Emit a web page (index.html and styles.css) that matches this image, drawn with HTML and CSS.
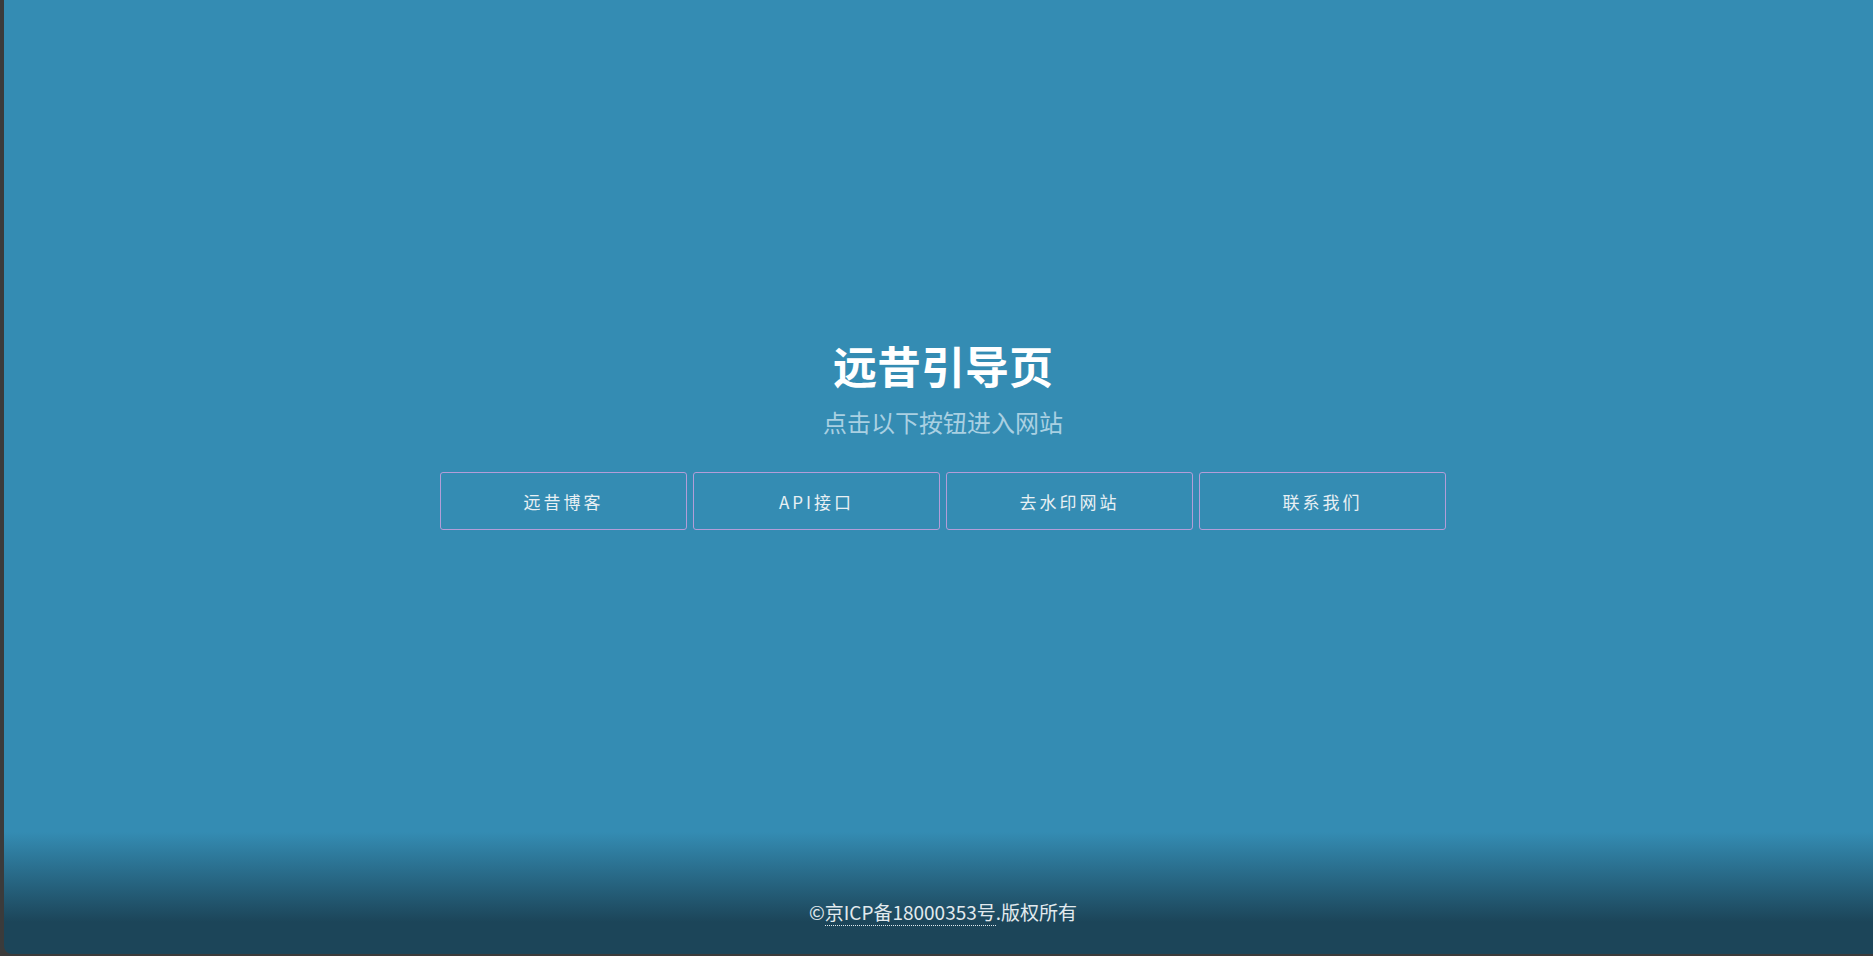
FILE: index.html
```html
<!DOCTYPE html>
<html lang="zh-CN">
<head>
<meta charset="utf-8">
<title>远昔引导页</title>
<link rel="stylesheet" href="styles.css">
</head>
<body>
<div class="page">
  <main class="main">
    <h1 class="title">远昔引导页</h1>
    <p class="subtitle">点击以下按钮进入网站</p>
    <nav class="buttons">
      <a class="btn" href="#">远昔博客</a>
      <a class="btn" href="#">API接口</a>
      <a class="btn" href="#">去水印网站</a>
      <a class="btn" href="#">联系我们</a>
    </nav>
  </main>
  <footer class="footer">©<a class="icp" href="#">京ICP备18000353号</a>.版权所有</footer>
</div>
</body>
</html>
```
FILE: styles.css
```css
html, body {
  margin: 0;
  padding: 0;
  height: 956px;
  overflow: hidden;
}
body {
  background: #3b3b3b;
  font-family: "Noto Sans CJK SC", "Noto Sans", sans-serif;
}
.page {
  margin-left: 4px;
  height: 954px;
  border-bottom-left-radius: 8px;
  background: linear-gradient(to bottom, #348cb3 0, #348cb3 832px, #1c4559 922px, #1c4559 100%);
  display: flex;
  flex-direction: column;
}
.main {
  flex: 1;
  padding-top: 337px;
  padding-left: 9px;
  display: flex;
  flex-direction: column;
  align-items: center;
}
.title {
  margin: 0;
  font-size: 44px;
  line-height: 56px;
  font-weight: 700;
  color: #ffffff;
}
.subtitle {
  margin: 13px 0 0;
  font-size: 24px;
  line-height: 32px;
  color: #a9d0e2;
}
.buttons {
  margin-top: 34px;
  display: flex;
  gap: 6px;
}
.btn {
  box-sizing: border-box;
  width: 247px;
  height: 58px;
  border: 1px solid #b39dd8;
  border-radius: 3px;
  display: flex;
  align-items: center;
  justify-content: center;
  color: #e8f0f4;
  text-decoration: none;
  font-size: 17px;
  letter-spacing: 3px;
}
.footer {
  padding: 0 0 29px 9px;
  text-align: center;
  font-size: 19px;
  line-height: 26px;
  color: #e2eaee;
}
.icp {
  color: #e2eaee;
  text-decoration: none;
  border-bottom: 1px dotted #e2eaee;
}
```
